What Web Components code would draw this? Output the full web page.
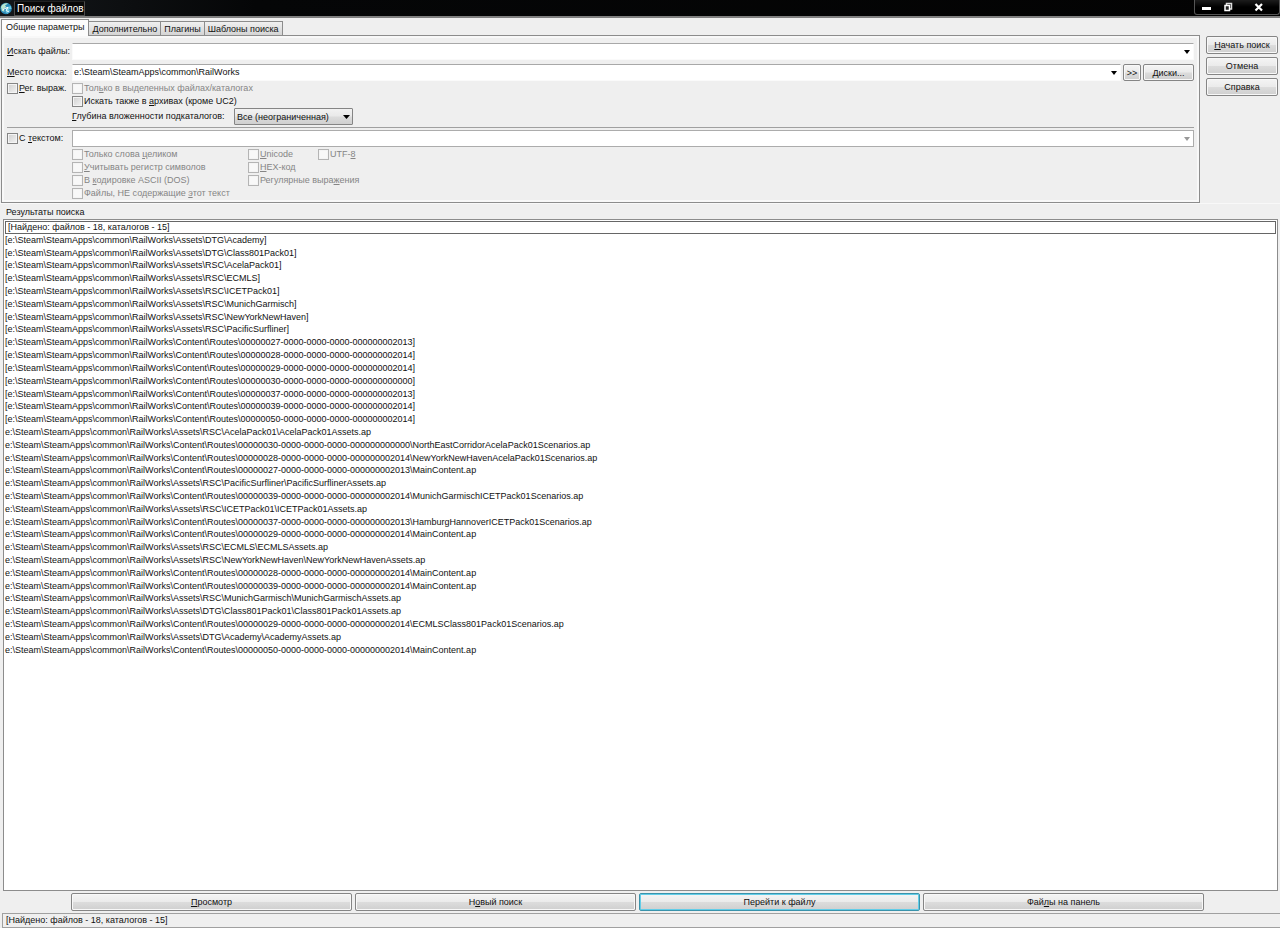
<!DOCTYPE html>
<html lang="ru">
<head>
<meta charset="utf-8">
<title>Поиск файлов</title>
<style>
html, body { margin: 0; height: 100%; }
body { background: #efefef; color: #111; font: 9px/13px "Liberation Sans", Arial, sans-serif; }
</style>
</head>
<body>
<search-window></search-window>
<script>
function define(name, html, setup) {
  const tpl = document.createElement('template');
  tpl.innerHTML = html;
  customElements.define(name, class extends HTMLElement {
    connectedCallback() {
      if (this.shadowRoot) return;
      const root = this.attachShadow({ mode: 'open' });
      root.append(tpl.content.cloneNode(true));
      if (setup) setup(this, root);
    }
  });
}

define('title-bar', `
<style>
:host { display: flex; height: 16px; background: linear-gradient(90deg, #14171a, #050607 20%, #030303); border-bottom: 2px solid #808080; color: #fff; overflow: hidden; }
.logo { margin: 2px 2px 0 0; width: 12px; height: 13px; flex: none; }
h1 { margin: 1px 0 0; padding: 0 0 0 2px; border: 1px solid #4c4c4c; border-top-color: #222; font-size: 10px; line-height: 14px; font-weight: normal; background: #080808; white-space: nowrap; }
.controls { margin-left: auto; display: flex; box-sizing: border-box; width: 86px; height: 15px; border: 1px solid #555; border-top: 0; border-radius: 0 0 3px 3px; background: linear-gradient(#1c1c1c, #000 50%); }
button { all: unset; flex: 0 0 22px; display: grid; place-items: center; }
button:last-child { flex: 1; }
svg { display: block; }
</style>
<svg class="logo" viewBox="0 0 12 13" aria-hidden="true">
  <circle cx="6" cy="6.5" r="5.8" fill="#2a8ab8"/>
  <path d="M1 5C2 2 5 .8 8 1.4L5 3.6 6.4 5 3.6 6.6 4.6 9.8 2 9Z" fill="#b9e6cf"/>
  <path d="M6 5.4L10.8 4 11.4 7 9 7 10 9.2 7.6 9.8 8 12 5.6 10.4Z" fill="#65c5de"/>
  <path d="M3 7.5L8 5.2 6.2 8.5 9 10" fill="none" stroke="#fff" stroke-width="1"/>
</svg>
<h1><slot></slot></h1>
<div class="controls">
  <button aria-label="Свернуть"><svg width="10" height="12"><rect x="1" y="6" width="9" height="3" fill="#fff"/></svg></button>
  <button aria-label="Развернуть"><svg width="10" height="12"><path d="M3.5 5V2.500H8.500V8H7" fill="none" stroke="#ddd" stroke-width="1.500"/><rect x="2" y="4.500" width="4.500" height="5" fill="#222" stroke="#fff" stroke-width="1.500"/></svg></button>
  <button aria-label="Закрыть"><svg width="10" height="12"><path d="M1.500 3L8 9.500M8 3L1.500 9.500" stroke="#fff" stroke-width="2.200"/></svg></button>
</div>`);

define('tab-strip', `
<style>
:host { display: flex; align-items: flex-end; height: 15px; }
::slotted(button) { font: inherit; color: inherit; margin: 0; box-sizing: border-box; height: 14px; line-height: 12px; padding: 1px 3px 0; border: 1px solid #8c8c8c; border-width: 1px 1px 0 0; border-radius: 0; background: linear-gradient(#f0f0f0, #d4d4d4); white-space: nowrap; }
::slotted(button[aria-selected=true]) { height: 17px; line-height: 14px; padding: 0 4px 2px; margin-bottom: -1px; border-left-width: 1px; background: #fcfcfc; position: relative; }
</style><slot></slot>`, host => host.setAttribute('role', 'tablist'));

define('push-button', `
<style>
:host { display: block; min-width: 0; }
button { font: inherit; color: inherit; box-sizing: border-box; width: 100%; height: 17px; margin: 0; padding: 0 1px; border: 1px solid #858585; border-radius: 2px; background: linear-gradient(#f4f4f4, #ebebeb 48%, #dcdcdc 52%, #cfcfcf); box-shadow: inset 0 0 0 1px #f8f8f8; line-height: 14px; white-space: nowrap; }
:host([tall]) button { height: 18px; }
:host([default]) button { border-color: #3a93ab; box-shadow: inset 0 0 0 1px #63cde8; }
</style><button type="button"><slot></slot></button>`);

define('check-box', `
<style>
:host { display: block; }
label { display: flex; align-items: center; gap: 1px; height: 13px; white-space: nowrap; }
input { appearance: none; flex: none; box-sizing: border-box; width: 11px; height: 11px; margin: 0; border: 1px solid #858585; background: linear-gradient(135deg, #cfcfcf, #f4f4f4); box-shadow: inset 0 0 0 1px #f4f4f4; }
:host([disabled]) { color: #858585; }
:host([disabled]) input { border-color: #b4b4b4; background: #f8f8f8; }
</style><label><input type="checkbox"><span><slot></slot></span></label>`,
(host, root) => { root.querySelector('input').disabled = host.hasAttribute('disabled'); });

define('combo-field', `
<style>
:host { display: flex; box-sizing: border-box; height: 17px; min-width: 0; background: #fff; border: 1px solid #fafafa; border-top-color: #a8a8a8; }
:host([disabled]) { border-color: #acacac; }
input { all: unset; flex: 1; min-width: 0; padding-left: 1px; font: inherit; }
button { all: unset; width: 13px; display: grid; place-items: center; }
svg { display: block; fill: #000; }
:host([disabled]) svg { fill: #999; }
</style>
<input type="text"><button type="button" aria-label="Открыть список"><svg width="6" height="4"><path d="M0 0H6L3 4Z"/></svg></button>`,
(host, root) => {
  const input = root.querySelector('input');
  input.value = host.getAttribute('value') || '';
  input.setAttribute('aria-label', host.getAttribute('label'));
  input.disabled = root.querySelector('button').disabled = host.hasAttribute('disabled');
});

define('drop-down', `
<style>
:host { display: inline-grid; width: 119px; align-items: center; }
select, svg { grid-area: 1 / 1; }
select { appearance: none; font: inherit; color: inherit; box-sizing: border-box; width: 100%; height: 17px; margin: 0; padding: 0 14px 0 2px; border: 1px solid #858585; border-radius: 1px; background: linear-gradient(#f2f2f2, #e9e9e9 48%, #dcdcdc 52%, #d0d0d0); }
svg { justify-self: end; margin-right: 3px; pointer-events: none; }
</style>
<select></select><svg width="7" height="4"><path d="M0 0H7L3.500 4Z"/></svg>`,
(host, root) => {
  const select = root.querySelector('select');
  select.setAttribute('aria-label', host.getAttribute('label'));
  select.append(new Option(host.getAttribute('value')));
});

define('search-form', `
<style>
:host { display: grid; grid-template-columns: 65px minmax(0, 1fr); box-sizing: border-box; border: 1px solid #8c8c8c; padding: 7px 5px 2px 5px; background: #efefef; box-shadow: inset 0 0 0 2px #f8f8f8; }
.caption { line-height: 17px; white-space: nowrap; }
.first { margin-bottom: 4px; }
.place { display: grid; grid-template-columns: minmax(0, 1fr) 18px 51px; gap: 0 2px; }
.checks { padding-top: 1px; }
.depth { display: flex; gap: 9px; line-height: 17px; }
.depth span { width: 153px; white-space: nowrap; }
hr { grid-column: 1 / -1; width: 100%; margin: 2px 0; border: 0; border-top: 1px solid #a0a0a0; }
.text { padding-top: 2px; }
.options { grid-column: 2; display: grid; grid-template-columns: 176px 70px 1fr; margin-top: 1px; }
.wide { grid-column: span 2; }
</style>
<span class="caption first"><u>И</u>скать файлы:</span>
<combo-field class="first" label="Искать файлы"></combo-field>
<span class="caption"><u>М</u>есто поиска:</span>
<div class="place">
  <combo-field label="Место поиска" value="e:\\Steam\\SteamApps\\common\\RailWorks"></combo-field>
  <push-button>&gt;&gt;</push-button>
  <push-button><u>Д</u>иски...</push-button>
</div>
<check-box class="checks"><u>Р</u>ег. выраж.</check-box>
<div class="checks">
  <check-box disabled>Тол<u>ь</u>ко в выделенных файлах/каталогах</check-box>
  <check-box>Искать также в <u>а</u>рхивах (кроме UC2)</check-box>
  <div class="depth"><span><u>Г</u>лубина вложенности подкаталогов:</span><drop-down label="Глубина вложенности подкаталогов" value="Все (неограниченная)"></drop-down></div>
</div>
<hr>
<check-box class="text">С <u>т</u>екстом:</check-box>
<combo-field label="С текстом" disabled></combo-field>
<div class="options">
  <check-box disabled>Только слова <u>ц</u>еликом</check-box>
  <check-box disabled><u>U</u>nicode</check-box>
  <check-box disabled>UTF-<u>8</u></check-box>
  <check-box disabled><u>У</u>читывать регистр символов</check-box>
  <check-box disabled class="wide"><u>H</u>EX-код</check-box>
  <check-box disabled>В <u>к</u>одировке ASCII (DOS)</check-box>
  <check-box disabled class="wide">Регулярные выра<u>ж</u>ения</check-box>
  <check-box disabled>Файлы, НЕ содержащие <u>э</u>тот текст</check-box>
</div>`);

const base = 'e:\\Steam\\SteamApps\\common\\RailWorks\\';
const route = id => base + 'Content\\Routes\\000000' + id.slice(0, 2) + '-0000-0000-0000-' + id.slice(2).padStart(12, '0');
const folders = [
  ...['DTG\\Academy', 'DTG\\Class801Pack01', 'RSC\\AcelaPack01', 'RSC\\ECMLS', 'RSC\\ICETPack01',
    'RSC\\MunichGarmisch', 'RSC\\NewYorkNewHaven', 'RSC\\PacificSurfliner'].map(p => base + 'Assets\\' + p),
  ...['272013', '282014', '292014', '30', '372013', '392014', '502014'].map(route)
].map(p => '[' + p + ']');
const files = [
  base + 'Assets\\RSC\\AcelaPack01\\AcelaPack01Assets.ap',
  route('30') + '\\NorthEastCorridorAcelaPack01Scenarios.ap',
  route('282014') + '\\NewYorkNewHavenAcelaPack01Scenarios.ap',
  route('272013') + '\\MainContent.ap',
  base + 'Assets\\RSC\\PacificSurfliner\\PacificSurflinerAssets.ap',
  route('392014') + '\\MunichGarmischICETPack01Scenarios.ap',
  base + 'Assets\\RSC\\ICETPack01\\ICETPack01Assets.ap',
  route('372013') + '\\HamburgHannoverICETPack01Scenarios.ap',
  route('292014') + '\\MainContent.ap',
  base + 'Assets\\RSC\\ECMLS\\ECMLSAssets.ap',
  base + 'Assets\\RSC\\NewYorkNewHaven\\NewYorkNewHavenAssets.ap',
  route('282014') + '\\MainContent.ap',
  route('392014') + '\\MainContent.ap',
  base + 'Assets\\RSC\\MunichGarmisch\\MunichGarmischAssets.ap',
  base + 'Assets\\DTG\\Class801Pack01\\Class801Pack01Assets.ap',
  route('292014') + '\\ECMLSClass801Pack01Scenarios.ap',
  base + 'Assets\\DTG\\Academy\\AcademyAssets.ap',
  route('502014') + '\\MainContent.ap'
];

define('result-list', `
<style>
:host { display: flex; min-height: 0; box-sizing: border-box; border: 1px solid #8c8c8c; background: #fff; }
ul { flex: 1; display: grid; grid-template-rows: repeat(52, 1fr); margin: 0; padding: 1px 1px 3px; list-style: none; overflow: hidden; }
li { line-height: 12px; white-space: nowrap; }
li[aria-selected] { box-sizing: border-box; border: 1px solid #666; padding-left: 2px; line-height: 10px; }
</style><ul role="listbox" aria-label="Результаты поиска"></ul>`,
(host, root) => {
  const list = root.querySelector('ul');
  [host.getAttribute('summary'), ...folders, ...files].forEach((text, i) => {
    const li = document.createElement('li');
    li.setAttribute('role', 'option');
    if (!i) li.setAttribute('aria-selected', 'true');
    li.textContent = text;
    list.append(li);
  });
});

define('status-bar', `
<style>
:host { display: block; box-sizing: border-box; height: 15px; line-height: 13px; padding-left: 3px; border: 1px solid #a0a0a0; border-right: 0; margin-left: 2px; }
</style><slot></slot>`);

define('search-window', `
<style>
:host { display: flex; flex-direction: column; min-height: 100vh; box-sizing: border-box; }
main { display: grid; grid-template-columns: minmax(0, 1fr) 72px; gap: 0 6px; padding: 2px 2px 0 1px; }
.side { display: grid; align-content: start; gap: 3px; padding-top: 16px; }
.heading { margin: 0; padding: 2px 0 0 6px; font: inherit; border-top: 1px solid #f8f8f8; }
result-list { flex: 1; margin: 0 2px 0 3px; }
.actions { display: grid; grid-template-columns: repeat(4, minmax(0, 1fr)); gap: 3px; padding: 2px 76px 2px 71px; }
</style>
<title-bar>Поиск файлов</title-bar>
<main>
  <div>
    <tab-strip>
      <button role="tab" aria-selected="true">Общие параметры</button>
      <button role="tab">Дополнительно</button>
      <button role="tab">Плагины</button>
      <button role="tab">Шаблоны поиска</button>
    </tab-strip>
    <search-form></search-form>
  </div>
  <div class="side">
    <push-button tall><u>Н</u>ачать поиск</push-button>
    <push-button tall>Отмена</push-button>
    <push-button tall>Справка</push-button>
  </div>
</main>
<h2 class="heading">Результаты поиска</h2>
<result-list summary="[Найдено: файлов - 18, каталогов - 15]"></result-list>
<div class="actions">
  <push-button tall><u>П</u>росмотр</push-button>
  <push-button tall>Н<u>о</u>вый поиск</push-button>
  <push-button tall default>Перейти к файлу</push-button>
  <push-button tall>Фай<u>л</u>ы на панель</push-button>
</div>
<status-bar>[Найдено: файлов - 18, каталогов - 15]</status-bar>`);
</script>
</body>
</html>
